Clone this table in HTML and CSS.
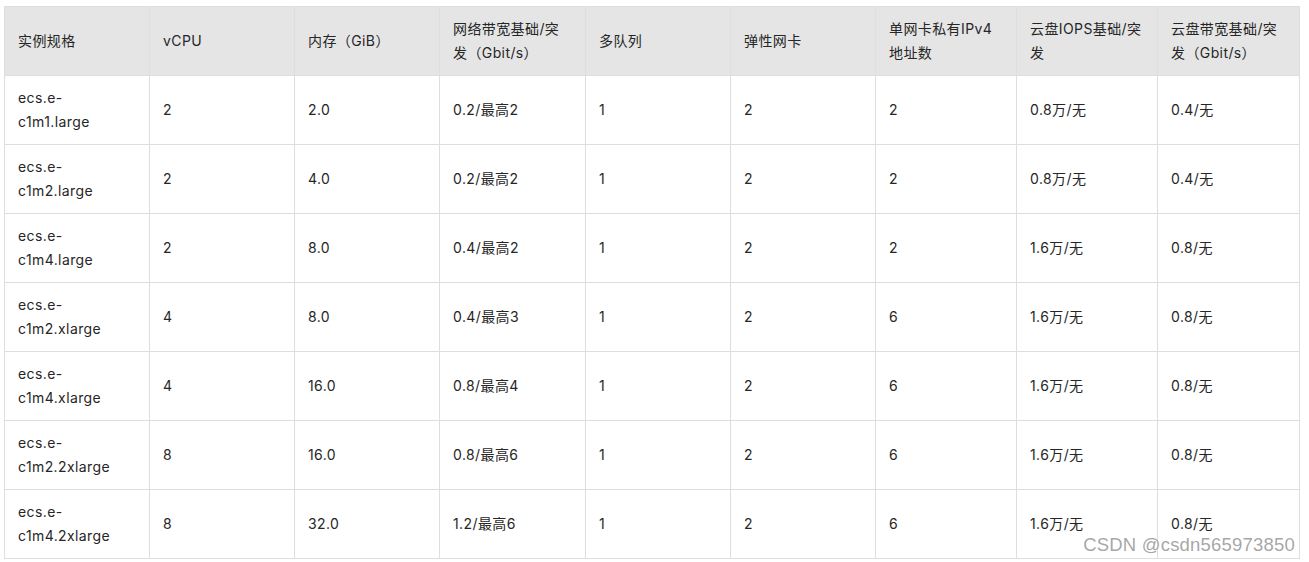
FILE: index.html
```html
<!DOCTYPE html>
<html lang="zh">
<head>
<meta charset="utf-8">
<link rel="stylesheet" href="styles.css">
</head>
<body>
<div class="page">
<table class="spec">
<colgroup>
<col class="c145"><col class="c145"><col class="c145"><col class="c146"><col class="c145"><col class="c145"><col class="c141"><col class="c141"><col class="c142">
</colgroup>
<thead>
<tr>
<th>实例规格</th><th>vCPU</th><th>内存（GiB）</th><th>网络带宽基础/突发（Gbit/s）</th><th>多队列</th><th>弹性网卡</th><th>单网卡私有IPv4地址数</th><th class="tight">云盘IOPS基础/突发</th><th>云盘带宽基础/突发（Gbit/s）</th>
</tr>
</thead>
<tbody>
<tr><td>ecs.e-<br>c1m1.large</td><td>2</td><td>2.0</td><td>0.2/最高2</td><td>1</td><td>2</td><td>2</td><td>0.8万/无</td><td>0.4/无</td></tr>
<tr><td>ecs.e-<br>c1m2.large</td><td>2</td><td>4.0</td><td>0.2/最高2</td><td>1</td><td>2</td><td>2</td><td>0.8万/无</td><td>0.4/无</td></tr>
<tr><td>ecs.e-<br>c1m4.large</td><td>2</td><td>8.0</td><td>0.4/最高2</td><td>1</td><td>2</td><td>2</td><td>1.6万/无</td><td>0.8/无</td></tr>
<tr><td>ecs.e-<br>c1m2.xlarge</td><td>4</td><td>8.0</td><td>0.4/最高3</td><td>1</td><td>2</td><td>6</td><td>1.6万/无</td><td>0.8/无</td></tr>
<tr><td>ecs.e-<br>c1m4.xlarge</td><td>4</td><td>16.0</td><td>0.8/最高4</td><td>1</td><td>2</td><td>6</td><td>1.6万/无</td><td>0.8/无</td></tr>
<tr><td>ecs.e-<br>c1m2.2xlarge</td><td>8</td><td>16.0</td><td>0.8/最高6</td><td>1</td><td>2</td><td>6</td><td>1.6万/无</td><td>0.8/无</td></tr>
<tr><td>ecs.e-<br>c1m4.2xlarge</td><td>8</td><td>32.0</td><td>1.2/最高6</td><td>1</td><td>2</td><td>6</td><td>1.6万/无</td><td>0.8/无</td></tr>
</tbody>
</table>
<div class="watermark">CSDN @csdn565973850</div>
</div>
</body>
</html>
```
FILE: styles.css
```css
html, body {
  margin: 0;
  padding: 0;
  background: #ffffff;
}
.page {
  position: relative;
  width: 1309px;
  height: 562px;
  padding: 6px 0 0 4px;
  box-sizing: border-box;
}
.spec {
  border-collapse: collapse;
  table-layout: fixed;
  width: 1296px;
  font-family: Inter, "Noto Sans CJK SC", sans-serif;
  font-size: 14px;
  letter-spacing: 0.4px;
  line-height: 24px;
  color: #262626;
}
.c145 { width: 145px; }
.c146 { width: 146px; }
.c141 { width: 141px; }
.c142 { width: 142px; }
.spec th, .spec td {
  border: 1px solid #dedede;
  padding: 0 16px 0 13px;
  text-align: left;
  vertical-align: middle;
  font-weight: 400;
  height: 69px;
  box-sizing: border-box;
}
.spec th.tight {
  padding-right: 8px;
}
.spec th {
  background: #e5e5e5;
}
.spec td {
  background: #ffffff;
}
.watermark {
  position: absolute;
  right: 14px;
  bottom: 6px;
  font-family: "Liberation Sans", Arial, sans-serif;
  font-size: 18.5px;
  color: rgba(150, 150, 150, 0.85);
  letter-spacing: 0.2px;
}
```
